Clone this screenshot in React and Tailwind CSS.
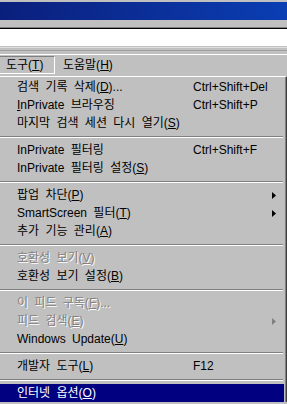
import React from 'react';

const items = [
  { label: <>검색 기록 삭제(<u>D</u>)...</>, key: 'Ctrl+Shift+Del' },
  { label: <><u>I</u>nPrivate 브라우징</>, key: 'Ctrl+Shift+P' },
  { label: <>마지막 검색 세션 다시 열기(<u>S</u>)</> },
  'sep',
  { label: <>InPrivate 필터링</>, key: 'Ctrl+Shift+F' },
  { label: <>InPrivate 필터링 설정(<u>S</u>)</> },
  'sep',
  { label: <>팝업 차단(<u>P</u>)</>, sub: true },
  { label: <>SmartScreen 필터(<u>T</u>)</>, sub: true },
  { label: <>추가 기능 관리(<u>A</u>)</> },
  'sep',
  { label: <>호환성 보기(<u>V</u>)</>, disabled: true },
  { label: <>호환성 보기 설정(<u>B</u>)</> },
  'sep',
  { label: <>이 피드 구독(<u>F</u>)...</>, disabled: true },
  { label: <>피드 검색(<u>E</u>)</>, disabled: true, sub: true },
  { label: <>Windows Update(<u>U</u>)</> },
  'sep',
  { label: <>개발자 도구(<u>L</u>)</>, key: 'F12' },
  'sep',
  { label: <>인터넷 옵션(<u>O</u>)</>, active: true },
];

function Arrow({ color }) {
  return (
    <svg width="4" height="7" viewBox="0 0 4 7" className="block">
      <path d="M0 0 L4 3.5 L0 7 Z" fill={color} />
    </svg>
  );
}

function MenuItem({ item }) {
  const text = item.active
    ? 'text-white'
    : item.disabled
      ? 'text-[#808080] [text-shadow:1px_1px_0_#ffffff]'
      : 'text-black';
  return (
    <div className={`flex h-[18px] items-center ${item.active ? 'bg-[#000080]' : ''} ${text}`}>
      <span className="w-[193px] shrink-0 whitespace-nowrap pl-[17px] [word-spacing:3px]">{item.label}</span>
      <span className="flex-1 whitespace-nowrap">{item.key}</span>
      <span className="w-[12px] shrink-0">
        {item.sub && <Arrow color={item.disabled ? '#808080' : '#000000'} />}
      </span>
    </div>
  );
}

export default function App() {
  return (
    <div
      className="h-[404px] w-[287px] overflow-hidden bg-[#c0c0c0] text-[12px] leading-none"
      style={{ fontFamily: '"Liberation Sans", "Noto Sans CJK KR", sans-serif' }}
    >
      <div className="h-[2px]" />
      <div className="h-[18px] bg-gradient-to-r from-[#0a1f7c] to-[#0a3eb3]" />
      <div className="h-[7px]" />
      <div className="h-[1px] bg-[#808080]" />
      <div className="h-[1px] bg-black" />
      <div className="h-[17px] bg-white" />
      <div className="h-[1px]" />
      <div className="h-[1px] bg-[#dfdfdf]" />
      <div className="h-[2px]" />
      <div className="h-[1px] bg-[#a0a0a0]" />
      <div className="h-[3px]" />
      <div className="h-[1px] bg-white" />

      <div className="flex h-[21px] items-start pt-[1px]">
        <div className="flex h-[18px] w-[55px] items-center border-t border-r border-b border-t-[#808080] border-r-white border-b-white pl-[6px]">
          도구(<u>T</u>)
        </div>
        <div className="flex h-[18px] items-center pl-[8px]">
          도움말(<u>H</u>)
        </div>
      </div>

      <div className="border-t border-r border-t-white border-r-[#404040]">
        <div className="border-r border-r-[#808080] pt-[1px] pr-[1px]">
          {items.map((item, i) =>
            item === 'sep' ? (
              <div key={i} className="flex h-[9px] flex-col justify-center pr-[1px]">
                <div className="h-[1px] bg-[#808080]" />
                <div className="h-[1px] bg-white" />
              </div>
            ) : (
              <MenuItem key={i} item={item} />
            )
          )}
        </div>
      </div>
    </div>
  );
}
